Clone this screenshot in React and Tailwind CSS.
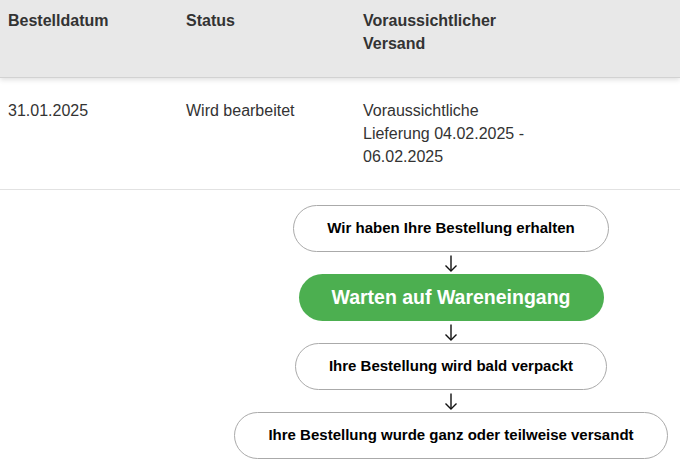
export default function App() {
    const steps = [
        { label: "Wir haben Ihre Bestellung erhalten", active: false, w: "w-[316px]" },
        { label: "Warten auf Wareneingang", active: true, w: "w-[305px]" },
        { label: "Ihre Bestellung wird bald verpackt", active: false, w: "w-[312px]" },
        { label: "Ihre Bestellung wurde ganz oder teilweise versandt", active: false, w: "w-[434px]" },
    ];

    return (
        <div className="w-[680px] h-[465px] bg-white overflow-hidden font-['Liberation_Sans',Arial,sans-serif] text-[#333]">
            {/* Kopfzeile */}
            <div className="relative z-10 h-[78px] bg-[#e8e8e8] border-b border-[#d2d2d2] shadow-[0_2px_5px_rgba(0,0,0,0.12)] flex pl-2 pt-[9px] text-[16px] font-bold leading-[23px]">
                <div className="w-[178px]">Bestelldatum</div>
                <div className="w-[177px]">Status</div>
                <div className="w-[170px]">Voraussichtlicher Versand</div>
            </div>

            {/* Bestellzeile */}
            <div className="flex pl-2 pt-[21px] pb-[21px] text-[16px] leading-[23px] border-b border-[#e2e2e2]">
                <div className="w-[178px]">31.01.2025</div>
                <div className="w-[177px]">Wird bearbeitet</div>
                <div className="w-[170px]">Voraussichtliche Lieferung 04.02.2025 - 06.02.2025</div>
            </div>

            {/* Statusverlauf */}
            <div className="ml-[222px] w-[458px] mt-[15px] flex flex-col items-center">
                {steps.map((s, i) => (
                    <div key={s.label} className="flex flex-col items-center">
                        {s.active ? (
                            <div className={`${s.w} h-[47px] rounded-full bg-[#4caf50] text-white font-bold text-[19.5px] flex items-center justify-center`}>
                                {s.label}
                            </div>
                        ) : (
                            <div className={`${s.w} h-[47px] rounded-full border border-[#aaa] bg-white text-black font-bold text-[15px] flex items-center justify-center`}>
                                {s.label}
                            </div>
                        )}
                        {i < steps.length - 1 && (
                            <div className="h-[22px] flex items-center justify-center">
                                <svg width="14" height="17" viewBox="0 0 14 17" fill="none" stroke="#111" strokeWidth="1.4">
                                    <path d="M7 0.5V16" />
                                    <path d="M1.5 10.5L7 16L12.5 10.5" />
                                </svg>
                            </div>
                        )}
                    </div>
                ))}
            </div>
        </div>
    );
}
